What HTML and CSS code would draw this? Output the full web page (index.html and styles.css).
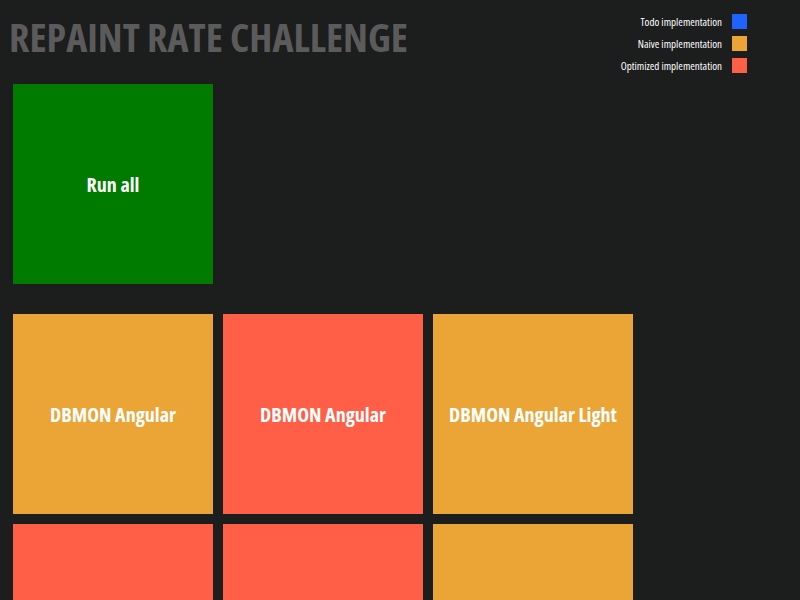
FILE: index.html
```html
<!DOCTYPE html>
<html>
<head>
<meta charset="utf-8">
<link rel="stylesheet" href="styles.css">
</head>
<body>
<header class="header">
  <h1 class="title">REPAINT RATE CHALLENGE</h1>
  <ul class="legend">
    <li class="legend-item">Todo implementation<span class="swatch todo"></span></li>
    <li class="legend-item">Naive implementation<span class="swatch naive"></span></li>
    <li class="legend-item">Optimized implementation<span class="swatch optimized"></span></li>
  </ul>
</header>
<main class="content">
  <div class="grid">
    <div class="tile run">Run all</div>
  </div>
  <div class="grid second">
    <div class="tile naive">DBMON Angular</div>
    <div class="tile optimized">DBMON Angular</div>
    <div class="tile naive">DBMON Angular Light</div>
    <div class="tile optimized"></div>
    <div class="tile optimized"></div>
    <div class="tile naive"></div>
  </div>
</main>
</body>
</html>
```

FILE: styles.css
```css
html, body {
  margin: 0;
  padding: 0;
  background: #1c1d1d;
  height: 100%;
  overflow: hidden;
}
body {
  font-family: "Open Sans", sans-serif;
  font-stretch: condensed;
}
.header {
  display: flex;
  align-items: flex-start;
  justify-content: space-between;
  padding: 0 53px 0 9px;
}
.title {
  margin: 12px 0 0 0;
  font-size: 40px;
  line-height: 50px;
  font-weight: 700;
  color: #5b5b5b;
  letter-spacing: 0;
}
.legend {
  list-style: none;
  margin: 14px 0 0 0;
  padding: 0;
  display: flex;
  flex-direction: column;
  gap: 7px;
}
.legend-item {
  display: flex;
  align-items: center;
  justify-content: flex-end;
  gap: 10px;
  height: 15px;
  font-size: 11px;
  color: #ffffff;
}
.swatch {
  width: 15px;
  height: 15px;
  display: block;
}
.swatch.todo { background: #1f63ff; }
.swatch.naive { background: #eba537; }
.swatch.optimized { background: #ff5f46; }
.content {
  padding: 11px 0 0 13px;
}
.grid {
  display: grid;
  grid-template-columns: repeat(3, 200px);
  gap: 10px;
}
.grid.second {
  margin-top: 30px;
}
.tile {
  height: 200px;
  display: flex;
  align-items: center;
  justify-content: center;
  color: #ffffff;
  font-size: 20px;
  font-weight: 700;
  box-sizing: border-box;
}
.tile.run { background: #007b00; }
.tile.naive { background: #eba537; }
.tile.optimized { background: #ff5f46; }
```
